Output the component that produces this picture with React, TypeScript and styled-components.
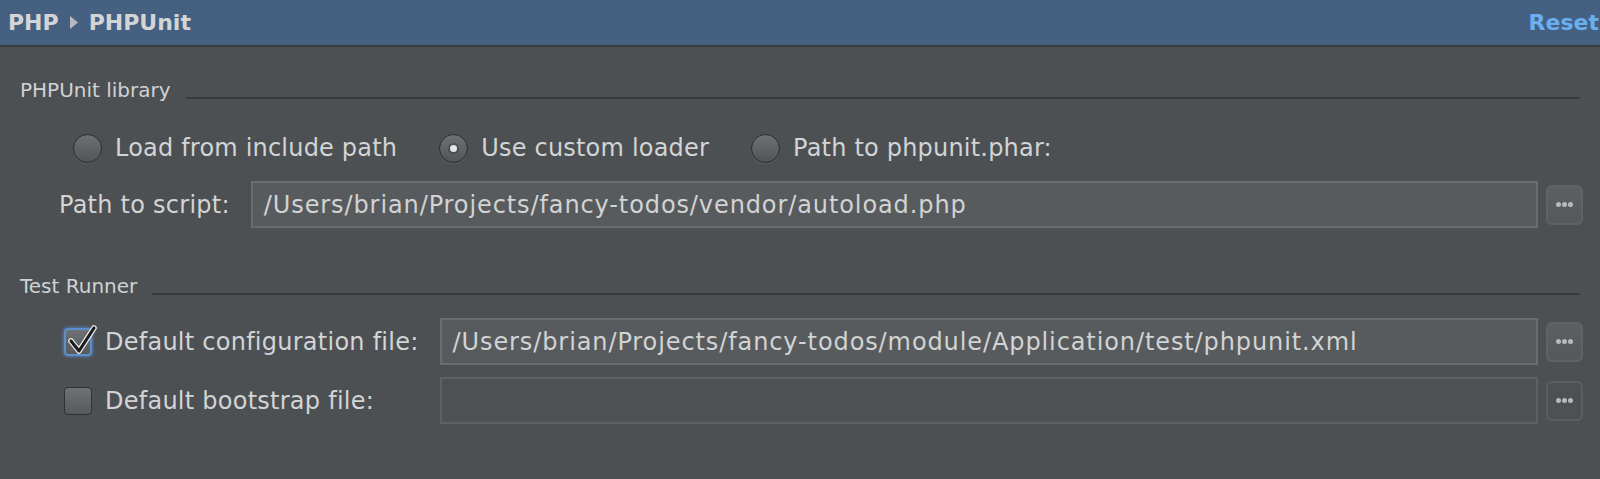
import React from "react";
import styled, { createGlobalStyle, css } from "styled-components";

const GlobalStyle = createGlobalStyle`
  html, body {
    margin: 0;
    padding: 0;
    background: #4d5053;
  }
  body {
    font-family: "DejaVu Sans", "Noto Sans", sans-serif;
  }
`;

const Page = styled.div`
  width: 1600px;
  height: 479px;
  overflow: hidden;
  background: #4d5053;
  color: #d0d2d4;
`;

const Header = styled.div`
  box-sizing: border-box;
  height: 47px;
  display: flex;
  align-items: center;
  justify-content: space-between;
  padding: 0 1px 0 8px;
  background: #466081;
  border-bottom: 2px solid #393c3f;
  font-size: 22px;
  font-weight: bold;
  line-height: 26px;
`;

const Crumbs = styled.div`
  display: flex;
  align-items: center;
  gap: 11px;
  color: #d3d4d6;
`;

const Reset = styled.span`
  color: #6aaff0;
`;

const Content = styled.div`
  padding: 31px 17px 0 20px;
`;

const SectionHeader = styled.div<{ $top: number }>`
  display: flex;
  align-items: flex-end;
  gap: 15px;
  height: 24px;
  margin: ${(p) => p.$top}px 3px 0 0;
`;

const SectionTitle = styled.span`
  font-size: 20px;
  line-height: 24px;
  color: #d0d2d4;
`;

const Rule = styled.div`
  flex: 1;
  height: 2px;
  margin-bottom: 3px;
  background: #393b3e;
`;

const RadioRow = styled.div`
  display: flex;
  align-items: center;
  gap: 42px;
  height: 30px;
  margin-top: 31px;
  padding-left: 53px;
`;

const Option = styled.label`
  display: flex;
  align-items: center;
  gap: 13px;
  font-size: 24px;
  letter-spacing: 0.2px;
  line-height: 30px;
  color: #d2d4d6;
`;

const RadioCircle = styled.span<{ $on?: boolean }>`
  box-sizing: border-box;
  width: 29px;
  height: 29px;
  border-radius: 50%;
  border: 1px solid #2b2d2f;
  background: linear-gradient(#6e7173, #525557);
  box-shadow: 0 1px 0 rgba(255, 255, 255, 0.08);
  display: flex;
  align-items: center;
  justify-content: center;
  ${(p) =>
    p.$on &&
    css`
      &::after {
        content: "";
        width: 7px;
        height: 7px;
        border-radius: 50%;
        background: #e6e6e6;
        box-shadow: 0 0 0 2px rgba(40, 40, 40, 0.35);
      }
    `}
`;

const FieldGrid = styled.div<{ $top: number; $indent: number }>`
  display: grid;
  grid-template-columns: auto 1fr 37px;
  grid-auto-rows: 47px;
  row-gap: 12px;
  align-items: center;
  margin-top: ${(p) => p.$top}px;
  padding-left: ${(p) => p.$indent}px;
`;

const FieldLabel = styled.div`
  display: flex;
  align-items: center;
  gap: 13px;
  font-size: 24px;
  letter-spacing: 0.25px;
  line-height: 30px;
  color: #d2d4d6;
  white-space: nowrap;
`;

const TextField = styled.div<{ $disabled?: boolean }>`
  box-sizing: border-box;
  height: 47px;
  margin: 0 8px 0 21px;
  padding: 0 11px;
  display: flex;
  align-items: center;
  font-size: 24px;
  letter-spacing: 0.9px;
  color: #d2d3d4;
  white-space: nowrap;
  overflow: hidden;
  border: 2px solid ${(p) => (p.$disabled ? "#5e6164" : "#6a6d6f")};
  background: ${(p) => (p.$disabled ? "#4e5154" : "#585b5d")};
`;

const BrowseButton = styled.div<{ $disabled?: boolean }>`
  box-sizing: border-box;
  width: 37px;
  height: 40px;
  border-radius: 6px;
  display: flex;
  align-items: center;
  justify-content: center;
  gap: 1px;
  border: 2px solid ${(p) => (p.$disabled ? "#5c5f62" : "#606366")};
  background: ${(p) =>
    p.$disabled ? "#4e5154" : "linear-gradient(#5d6062, #55585a)"};
`;

const Dot = styled.span`
  width: 5px;
  height: 5px;
  border-radius: 50%;
  background: #b9b9b9;
`;

const CheckBox = styled.span<{ $on?: boolean }>`
  position: relative;
  box-sizing: border-box;
  width: 28px;
  height: 28px;
  flex: none;
  border-radius: 4px;
  background: linear-gradient(#6f7274, #57595b);
  border: 1px solid #2f3133;
  ${(p) =>
    p.$on &&
    css`
      border: 2px solid #5d8fce;
      box-shadow: 0 0 3px 1px rgba(90, 140, 205, 0.7);
    `}
`;

const CheckMark = styled.svg`
  position: absolute;
  left: 2px;
  top: -3px;
  overflow: visible;
`;

const Browse = ({ disabled }: { disabled?: boolean }) => (
  <BrowseButton $disabled={disabled}>
    <Dot />
    <Dot />
    <Dot />
  </BrowseButton>
);

export default function App() {
  return (
    <Page>
      <GlobalStyle />
      <Header>
        <Crumbs>
          <span>PHP</span>
          <svg width="8" height="13" viewBox="0 0 8 13">
            <polygon points="0,0 8,6.5 0,13" fill="#b9babb" />
          </svg>
          <span>PHPUnit</span>
        </Crumbs>
        <Reset>Reset</Reset>
      </Header>
      <Content>
        <SectionHeader $top={0}>
          <SectionTitle>PHPUnit library</SectionTitle>
          <Rule />
        </SectionHeader>
        <RadioRow>
          <Option>
            <RadioCircle />
            Load from include path
          </Option>
          <Option>
            <RadioCircle $on />
            Use custom loader
          </Option>
          <Option>
            <RadioCircle />
            Path to phpunit.phar:
          </Option>
        </RadioRow>
        <FieldGrid $top={18} $indent={39}>
          <FieldLabel>Path to script:</FieldLabel>
          <TextField>/Users/brian/Projects/fancy-todos/vendor/autoload.php</TextField>
          <Browse />
        </FieldGrid>

        <SectionHeader $top={46}>
          <SectionTitle>Test Runner</SectionTitle>
          <Rule />
        </SectionHeader>
        <FieldGrid $top={20} $indent={44}>
          <FieldLabel>
            <CheckBox $on>
              <CheckMark width="28" height="28" viewBox="0 0 28 28">
                <path
                  d="M3 14 L11 24 L26 1"
                  fill="none"
                  stroke="#f2f2f2"
                  strokeWidth="5.5"
                  strokeLinecap="round"
                  strokeLinejoin="round"
                />
                <path
                  d="M3 14 L11 24 L26 1"
                  fill="none"
                  stroke="#1c1d1e"
                  strokeWidth="3.2"
                  strokeLinecap="round"
                  strokeLinejoin="round"
                />
              </CheckMark>
            </CheckBox>
            Default configuration file:
          </FieldLabel>
          <TextField>/Users/brian/Projects/fancy-todos/module/Application/test/phpunit.xml</TextField>
          <Browse />
          <FieldLabel>
            <CheckBox />
            Default bootstrap file:
          </FieldLabel>
          <TextField $disabled />
          <Browse disabled />
        </FieldGrid>
      </Content>
    </Page>
  );
}
